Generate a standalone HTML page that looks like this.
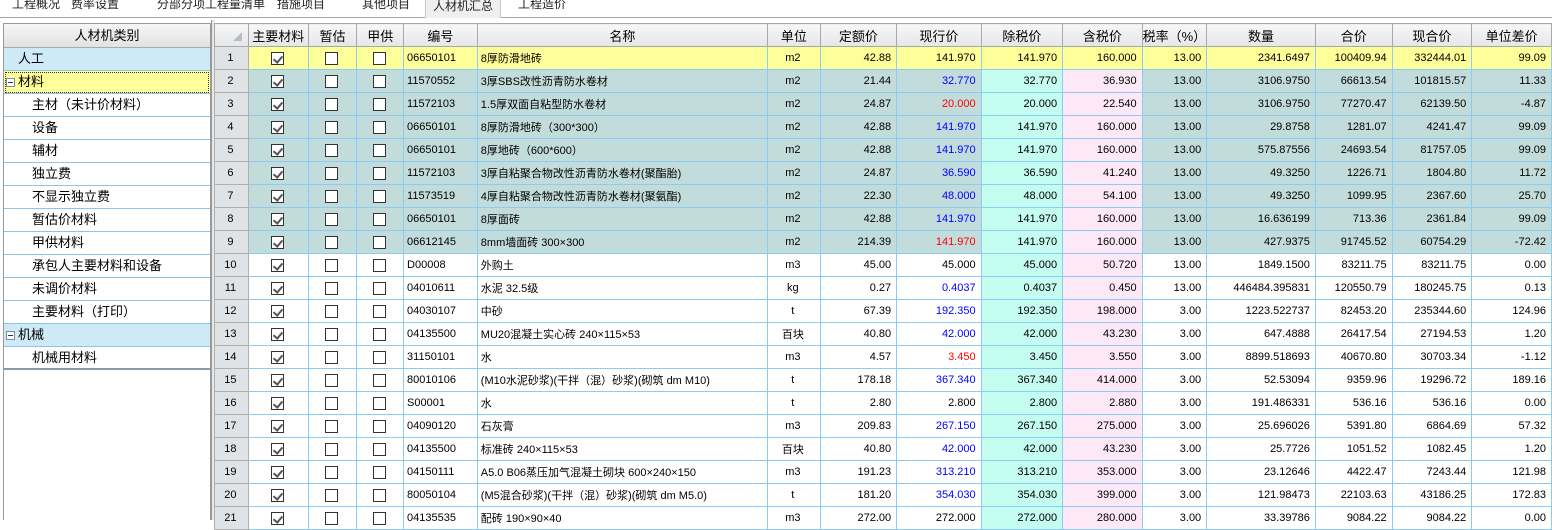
<!DOCTYPE html>
<html><head><meta charset="utf-8">
<style>
*{margin:0;padding:0;box-sizing:border-box}
body{width:1552px;height:520px;overflow:hidden;background:#fff;font-family:"Liberation Sans","Noto Sans CJK SC",sans-serif;font-size:12px;color:#000;position:relative}
.tabs{position:absolute;left:0;top:0;width:1552px;height:18px;border-bottom:1px solid #a8a8a8;background:#fff}
.tab{position:absolute;top:-5px;height:22px;line-height:18px;font-size:12px;color:#222}
.tab.act{background:#efefef;border:1px solid #c8c8c8;border-bottom:none;top:-4px;height:22px;padding:0 7px}
#sep{position:absolute;left:211px;top:20px;width:4px;height:500px;background:#e8e8e8;border-left:1px solid #999}
#left{position:absolute;left:3px;top:23px;width:208px;height:497px;border:1px solid #999;border-bottom:none;background:#fff}
#left .h{height:24px;line-height:23px;text-align:center;background:linear-gradient(#f6f6f6,#e2e2e2);border-bottom:1px solid #aaa;font-size:13px}
#left .i{height:23px;line-height:22px;border-bottom:1px solid #8cc4ee;font-size:13px;position:relative}
#left .b{background:#cfeaf7}
#left .y{background:#ffff99;outline:1px dotted #333;outline-offset:-2px}
.mn{display:inline-block;width:9px;height:9px;border:1px solid #7a8aa8;position:absolute;left:2px;top:7px;background:#fff}
.mn:after{content:"";position:absolute;left:1px;top:3px;width:5px;height:1px;background:#335}
#grid{position:absolute;left:214px;top:23px;border-collapse:collapse;table-layout:fixed;border-left:1px solid #999}
#grid td,#grid th{height:23px;border:1px solid #8ccbf5;padding:0 5px 0 3px;white-space:nowrap;overflow:hidden;font-weight:normal}
#grid th{background:linear-gradient(#f7f7f7,#e4e6e8);border:1px solid #a8a8a8;font-size:13px;text-align:center;padding:0}
#grid td{font-size:11px}
td.n{text-align:center;background:#e0e3e6 !important;border-color:#b0b0b0 !important;font-size:12px}
td.c{text-align:center;font-size:12px}
td.r{text-align:right}
td.nm{font-size:12px}
.cb{display:inline-block;width:13px;height:13px;border:1px solid #333;background:#fff;vertical-align:middle;position:relative}
.cb.k:after{content:"";position:absolute;left:3px;top:1px;width:4px;height:7px;border:solid #555;border-width:0 2px 2px 0;transform:rotate(40deg)}
tr.y td{background:#ffff99}
tr.g td{background:#c2dcdc}
tr.g td.cy,tr.w td.cy{background:#c4fcef}
tr.g td.pk,tr.w td.pk{background:#fde9f6}
td.dk{border-left:1px solid #777 !important}
.bl{color:#0000ff}.rd{color:#ff0000}
.tri{display:inline-block;width:0;height:0;border-left:9px solid transparent;border-bottom:9px solid #bbb;margin-left:12px;margin-top:6px}
</style></head><body>
<div class="tabs">
<span class="tab" style="left:12px">工程概况</span>
<span class="tab" style="left:71px">费率设置</span>
<span class="tab" style="left:157px">分部分项工程量清单</span>
<span class="tab" style="left:277px">措施项目</span>
<span class="tab" style="left:362px">其他项目</span>
<span class="tab act" style="left:425px">人材机汇总</span>
<span class="tab" style="left:518px">工程造价</span>
</div>
<div id="sep"></div>
<div id="left">
<div class="h">人材机类别</div>
<div class="i b" style="padding-left:14px">人工</div>
<div class="i y" style="padding-left:14px"><span class="mn"></span>材料</div>
<div class="i" style="padding-left:28px">主材（未计价材料）</div>
<div class="i" style="padding-left:28px">设备</div>
<div class="i" style="padding-left:28px">辅材</div>
<div class="i" style="padding-left:28px">独立费</div>
<div class="i" style="padding-left:28px">不显示独立费</div>
<div class="i" style="padding-left:28px">暂估价材料</div>
<div class="i" style="padding-left:28px">甲供材料</div>
<div class="i" style="padding-left:28px">承包人主要材料和设备</div>
<div class="i" style="padding-left:28px">未调价材料</div>
<div class="i" style="padding-left:28px">主要材料（打印）</div>
<div class="i b" style="padding-left:14px"><span class="mn"></span>机械</div>
<div class="i" style="padding-left:28px;border-bottom:2px solid #8a9ab0">机械用材料</div>
</div>
<table id="grid">
<colgroup><col style="width:34px"><col style="width:60px"><col style="width:49px"><col style="width:47px"><col style="width:74px"><col style="width:291px"><col style="width:53px"><col style="width:77px"><col style="width:85px"><col style="width:82px"><col style="width:80px"><col style="width:63px"><col style="width:109px"><col style="width:77px"><col style="width:80px"><col style="width:80px"></colgroup>
<tbody id="tb">
<tr><th><span class="tri"></span></th><th>主要材料</th><th>暂估</th><th>甲供</th><th>编号</th><th>名称</th><th>单位</th><th>定额价</th><th class="dk" style="border-left:1px solid #777">现行价</th><th>除税价</th><th>含税价</th><th>税率（%）</th><th>数量</th><th>合价</th><th>现合价</th><th>单位差价</th></tr>
</tbody></table>
<script>
var D=[
["06650101","8厚防滑地砖","m2","42.88","141.970","","141.970","160.000","13.00","2341.6497","100409.94","332444.01","99.09"],
["11570552","3厚SBS改性沥青防水卷材","m2","21.44","32.770","bl","32.770","36.930","13.00","3106.9750","66613.54","101815.57","11.33"],
["11572103","1.5厚双面自粘型防水卷材","m2","24.87","20.000","rd","20.000","22.540","13.00","3106.9750","77270.47","62139.50","-4.87"],
["06650101","8厚防滑地砖（300*300）","m2","42.88","141.970","bl","141.970","160.000","13.00","29.8758","1281.07","4241.47","99.09"],
["06650101","8厚地砖（600*600）","m2","42.88","141.970","bl","141.970","160.000","13.00","575.87556","24693.54","81757.05","99.09"],
["11572103","3厚自粘聚合物改性沥青防水卷材(聚酯胎)","m2","24.87","36.590","bl","36.590","41.240","13.00","49.3250","1226.71","1804.80","11.72"],
["11573519","4厚自粘聚合物改性沥青防水卷材(聚氨酯)","m2","22.30","48.000","bl","48.000","54.100","13.00","49.3250","1099.95","2367.60","25.70"],
["06650101","8厚面砖","m2","42.88","141.970","bl","141.970","160.000","13.00","16.636199","713.36","2361.84","99.09"],
["06612145","8mm墙面砖 300×300","m2","214.39","141.970","rd","141.970","160.000","13.00","427.9375","91745.52","60754.29","-72.42"],
["D00008","外购土","m3","45.00","45.000","","45.000","50.720","13.00","1849.1500","83211.75","83211.75","0.00"],
["04010611","水泥 32.5级","kg","0.27","0.4037","bl","0.4037","0.450","13.00","446484.395831","120550.79","180245.75","0.13"],
["04030107","中砂","t","67.39","192.350","bl","192.350","198.000","3.00","1223.522737","82453.20","235344.60","124.96"],
["04135500","MU20混凝土实心砖 240×115×53","百块","40.80","42.000","bl","42.000","43.230","3.00","647.4888","26417.54","27194.53","1.20"],
["31150101","水","m3","4.57","3.450","rd","3.450","3.550","3.00","8899.518693","40670.80","30703.34","-1.12"],
["80010106","(M10水泥砂浆)(干拌（混）砂浆)(砌筑 dm M10)","t","178.18","367.340","bl","367.340","414.000","3.00","52.53094","9359.96","19296.72","189.16"],
["S00001","水","t","2.80","2.800","","2.800","2.880","3.00","191.486331","536.16","536.16","0.00"],
["04090120","石灰膏","m3","209.83","267.150","bl","267.150","275.000","3.00","25.696026","5391.80","6864.69","57.32"],
["04135500","标准砖 240×115×53","百块","40.80","42.000","bl","42.000","43.230","3.00","25.7726","1051.52","1082.45","1.20"],
["04150111","A5.0 B06蒸压加气混凝土砌块  600×240×150","m3","191.23","313.210","bl","313.210","353.000","3.00","23.12646","4422.47","7243.44","121.98"],
["80050104","(M5混合砂浆)(干拌（混）砂浆)(砌筑 dm M5.0)","t","181.20","354.030","bl","354.030","399.000","3.00","121.98473","22103.63","43186.25","172.83"],
["04135535","配砖 190×90×40","m3","272.00","272.000","","272.000","280.000","3.00","33.39786","9084.22","9084.22","0.00"]];
var h="";
D.forEach(function(r,i){var cl=i==0?"y":(i<9?"g":"w");
h+='<tr class="'+cl+'"><td class="n">'+(i+1)+'</td><td class="c"><span class="cb k"></span></td><td class="c"><span class="cb"></span></td><td class="c"><span class="cb"></span></td><td>'+r[0]+'</td><td class="nm">'+r[1]+'</td><td class="c">'+r[2]+'</td><td class="r">'+r[3]+'</td><td class="r dk '+r[5]+'">'+r[4]+'</td><td class="r cy">'+r[6]+'</td><td class="r pk">'+r[7]+'</td><td class="r">'+r[8]+'</td><td class="r">'+r[9]+'</td><td class="r">'+r[10]+'</td><td class="r">'+r[11]+'</td><td class="r">'+r[12]+'</td></tr>';});
document.getElementById("tb").insertAdjacentHTML("beforeend",h);
</script>
</body></html>
